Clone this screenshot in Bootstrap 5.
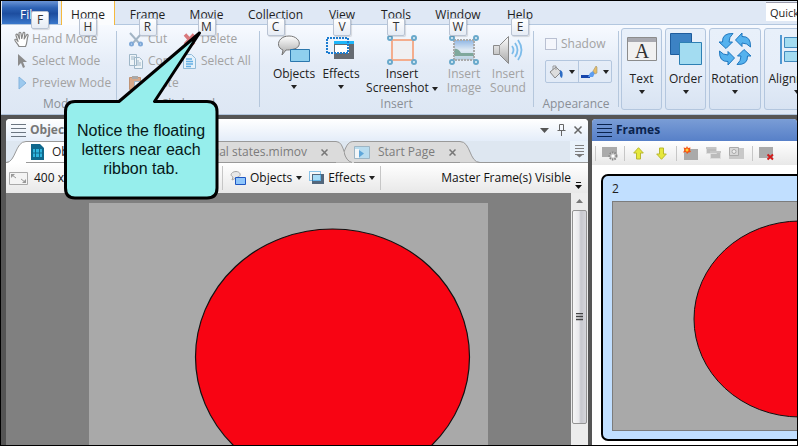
<!DOCTYPE html>
<html lang="en">
<head>
<meta charset="utf-8">
<meta name="viewport" content="width=device-width, initial-scale=1">
<title>Objects – Frames</title>
<link href="https://cdn.jsdelivr.net/npm/bootstrap@5.3.0/dist/css/bootstrap.min.css" rel="stylesheet">
<style>
body{font:12px/14px "Open Sans","Noto Sans",sans-serif;color:#1e1e1e;background:#555}
button{font:inherit;color:inherit;background:none;border:0;padding:0}
svg{display:block;flex:none}
.app{border:1px solid #000;background:#555}
.strip{height:24px;background:#dfe8f5;border-bottom:1px solid #b3c7df;padding-left:1px}
.rtab{height:23px;padding-top:4px;text-align:center;flex:none}
.w-s{width:54px}.w-m{width:59px}.w-l{width:79px}.w-x{width:70px}
.rtab.file{width:56px;background:linear-gradient(#6a94d6,#2d62b4 30%,#1d4d9f 55%,#3a78cc);color:#fff;padding:4px 18px 0;text-align:left}
.rtab.home{width:54px;margin:0 3px;height:24px;background:#fbfcfe;border:solid #f5b93d;border-width:0 1px;}
.keytip{position:absolute;left:50%;top:17px;margin-left:-9px;width:18px;height:18px;border:1px solid #b9c3d3;border-radius:2px;background:linear-gradient(#fff,#e6ecf5);color:#333;line-height:16px;text-align:center;z-index:3;box-shadow:1px 1px 1px #0002}
.file .keytip{top:10px;left:38px}
.quick{width:31px;height:19px;margin-top:1px;border:0;border-top:1px solid #9b9bab;padding:0 0 0 4px;font:11px "Open Sans",sans-serif;background:#fff;color:#222}
.quick::placeholder{color:#222;opacity:1}
.ribbon{height:90px;background:linear-gradient(#f7faff,#e4ecf7 45%,#dde7f4);border-bottom:1px solid #b0c4dc;padding-left:1px;color:#222}
.grp{border-right:1px solid #b5c7dc;margin:6px 0 7px;height:76px;flex:none}
.grp .rows{margin-top:-3px;height:66px}
.glabel{color:#8a8f96;text-align:center;line-height:14px;margin-top:3px}
.off{color:#a2a2a2}
.tool{height:22px;display:flex;align-items:center;gap:5px;white-space:nowrap}
.tool.tight{gap:2px}
.big{display:flex;flex-direction:column;align-items:center;padding-top:3px;flex:none;white-space:nowrap}
.big .cap{margin-top:2px;display:block}
.caret{display:inline-block;border:solid transparent;border-width:4px 3px 0;border-top-color:#222;height:0;flex:none;vertical-align:middle}
.pal{border:1px solid #b3c6de;border-radius:3px;height:82px;margin:3px 3px 0 0;padding-top:3px;background:linear-gradient(#e8f0fa,#e6eef9 50%,#d8e3f2)}
.pal.first{margin-left:2px}
.pal .cap{margin-top:6px}
.tick{width:12px;height:12px;border:1px solid #b9c0d2;background:#f4f6fc}
.tick:disabled,.tick:disabled~label{opacity:1!important}
.split{border:1px solid #b3c6de;border-radius:2px;height:23px;width:67px}
.split button{display:flex;align-items:center;justify-content:center;gap:5px;flex:1}
.split button+button{border-left:1px solid #b3c6de}
.work{display:grid;grid-template-columns:582fr 205fr;gap:4px;padding:4px 0 0 5px;flex:1;min-height:0}
.pane{display:flex;flex-direction:column;min-width:0;min-height:0;overflow:hidden;border-radius:4px 4px 0 0;background:#fff}
.phead{height:22px;display:flex;align-items:center;flex:none;padding:0 4px 0 5px;font-weight:700;font-size:12px}
.phead.l{background:linear-gradient(#fff,#e4edf9);color:#777}
.phead.r{background:linear-gradient(#7a9dd6,#5780c8);color:#0a234d}
.tabs{height:22px;background:#dee7f1;display:flex;flex:none;border-bottom:1px solid #999}
.dtab{display:flex;height:22px;flex:none}
.dtab>button,.dtab>div{border-top:1px solid #999;background:#dbdbdb;color:#7c7c7c;display:flex;align-items:center;height:21px;white-space:nowrap}
.dtab.on>button{background:#fff;color:#222}
.bar{height:30px;flex:none;display:flex;align-items:center;background:linear-gradient(#fff,#e8e8e8);color:#111;white-space:nowrap}
.vsep{width:1px;background:#c6c6c6;flex:none}
.stage{background:#808080;padding-top:10px;flex:1;min-width:0;overflow:hidden}
.sheet{width:399px;height:297px;background:#a9a9a9;margin:0 auto}
.scroll{width:17px;background:#ececec;padding:0 1px;flex:none}
.thumb{height:214px;border:1px solid #939393;border-radius:2px;background:linear-gradient(90deg,#f6f6f6,#e9e9ec 45%,#c6c7cd 60%,#d5d5da)}
.frame{border:2px solid #000;border-radius:7px;background:#c1dfff;height:267px;width:333px;margin:9px 0 0 9px;padding:6px 10px 0 9px;flex:none}
.frame .pic{border:1px solid #7c7c7c;margin-top:5px}
.callout{position:absolute;left:62px;top:30px;z-index:5;width:158px}
.callout p{position:absolute;top:90px;left:0;width:156px;font:16px/19px "Liberation Sans",Arial,sans-serif;color:#061818;text-align:center;margin:0}
</style>
</head>
<body class="overflow-hidden">
<div class="app vh-100 d-flex flex-column overflow-hidden position-relative">
<nav class="strip d-flex flex-shrink-0" aria-label="Ribbon tabs">
  <button class="rtab file position-relative">File<span class="keytip">F</span></button>
  <button class="rtab home position-relative">Home<span class="keytip">H</span></button>
  <button class="rtab w-m position-relative">Frame<span class="keytip">R</span></button>
  <button class="rtab w-m position-relative">Movie<span class="keytip">M</span></button>
  <button class="rtab w-l position-relative">Collection<span class="keytip">C</span></button>
  <button class="rtab w-s position-relative">View<span class="keytip">V</span></button>
  <button class="rtab w-s position-relative">Tools<span class="keytip">T</span></button>
  <button class="rtab w-x position-relative">Window<span class="keytip">W</span></button>
  <button class="rtab w-s position-relative">Help<span class="keytip">E</span></button>
  <input class="quick ms-auto flex-shrink-0" placeholder="Quick" aria-label="Quick search">
</nav>

<div class="ribbon d-flex flex-shrink-0 overflow-hidden">
  <section class="grp" style="width:115px">
    <div class="rows ps-2 off">
      <button class="tool tight ps-1"><svg width="16" height="17" viewBox="0 0 16 17" fill="#fff" stroke="#888" stroke-width="1.2" stroke-linejoin="round"><path d="M5 15.5C4 13 1 10.5.8 9c0-1 1.400-1.200 2.400.5L4 10.500 2 4.500c-.4-1.500 1.200-2 1.800-.6L5.500 8 5 2.500C5 .8 6.800.8 7 2.500L7.700 7.500 9 2.300c.5-1.500 2-1 1.800.5L10.200 8l2.200-3.800c.8-1.400 2.200-.6 1.600.8C12.500 8.500 13.500 12 11.500 15.500z"/></svg>Hand Mode</button>
      <button class="tool tight ps-1"><svg width="16" height="16" viewBox="0 0 16 16"><path d="M4 1v12l3-3 2 5 2-1-2-5h4z" fill="#8c8c8c"/></svg>Select Mode</button>
      <button class="tool tight ps-1"><svg width="16" height="16" viewBox="0 0 16 16"><path d="M5 2v12l7-6z" fill="#9cc9ee" stroke="#86b5de"/></svg>Preview Mode</button>
    </div>
    <div class="glabel">Mode</div>
  </section>
  <section class="grp" style="width:143px">
    <div class="rows d-flex off" style="padding-left:12px">
      <div style="width:54px">
        <button class="tool"><svg width="14" height="15" viewBox="0 0 14 15" fill="none" stroke="#7fa9d8" stroke-width="2"><path d="M1 1l9 10M13 1L4 11" stroke="#a3b5c5"/><circle cx="2.500" cy="12" r="1.500"/><circle cx="11.500" cy="12" r="1.500"/></svg>Cut</button>
        <button class="tool"><svg width="14" height="15" viewBox="0 0 14 15" fill="#eef4f8" stroke="#9fb7c8"><path d="M.5.5h7v11h-7zM5.500 3.500h5l3 3v8h-8z"/><path d="M7 7h3M7 9h5M7 11h5M2 3h4M2 5h3"/></svg>Copy</button>
        <button class="tool"><svg width="14" height="15" viewBox="0 0 14 15"><path d="M.5 1.500h11v12H.5z" fill="#d8a98a" stroke="#bf9375"/><path d="M3 0h6v3H3z" fill="#a9a9a9"/><path d="M5.500 5.500h8v9h-8z" fill="#eef3f8" stroke="#9fb7c8"/></svg>Paste</button>
      </div>
      <div>
        <button class="tool"><svg width="13" height="13" viewBox="0 0 13 13"><path d="M2 1.500l9 10M11 1.500l-9 10" stroke="#d9787c" stroke-width="3.500"/></svg>Delete</button>
        <button class="tool"><svg width="13" height="15" viewBox="0 0 13 15"><path d="M.5.5h8l4 4v10H.5z" fill="#e4f1fb" stroke="#91bbd8"/><path d="M3 5h6M3 7.500h7M3 10h7M3 12.500h5" stroke="#63afe4" stroke-width="1.500"/></svg>Select All</button>
      </div>
    </div>
    <div class="glabel">Clipboard</div>
  </section>
  <section class="grp" style="width:274px">
    <div class="rows d-flex pt-1">
      <button class="big ps-2" style="width:60px"><svg width="34" height="30" viewBox="0 0 34 30"><defs><linearGradient id="gb" x2="0" y2="1"><stop stop-color="#fff"/><stop offset="1" stop-color="#a8a8a8"/></linearGradient></defs><path d="M5 20l1-5C-2 12 1 1 12 1s14 11 5 13c-3 1-6 1-8 1z" fill="url(#gb)" stroke="#777"/><path d="M13.500 14.500h19v12h-19z" fill="#8fd0ee" stroke="#2b77ad"/></svg><span class="cap">Objects</span><i class="caret mt-1"></i></button>
      <button class="big" style="width:42px"><svg width="30" height="30" viewBox="0 0 30 30"><path d="M8 6h20v18H8z" fill="#666b72"/><path d="M8 6h20v3H8z" fill="#1eb6fa"/><path d="M9 10h14v8H9z" fill="#fff"/><path d="M1 3h21v15H1z" fill="none" stroke="#1c7cd0" stroke-width="2" stroke-dasharray="2 1"/></svg><span class="cap">Effects</span><i class="caret mt-1"></i></button>
      <button class="big" style="width:80px"><svg width="32" height="30" viewBox="0 0 32 30"><path d="M6 5h21v20H6z" fill="#f0f0f2" stroke="#f4ad8d" stroke-width="2"/><g fill="#e9f4fa" stroke="#69a9cb" stroke-width="2"><circle cx="4" cy="3" r="2"/><circle cx="28" cy="3" r="2"/><circle cx="4" cy="27" r="2"/><circle cx="28" cy="27" r="2"/></g></svg><span class="cap">Insert<br>Screenshot <i class="caret"></i></span></button>
      <button class="big off" style="width:44px"><svg width="32" height="30" viewBox="0 0 32 30"><defs><linearGradient id="sky" x2="0" y2="1"><stop stop-color="#8fb6e4"/><stop offset=".5" stop-color="#dfeaf4"/><stop offset="1" stop-color="#b7cfe0"/></linearGradient></defs><path d="M6 5h20v20H6z" fill="url(#sky)"/><path d="M6 14q4-1 7 4h13v3H6z" fill="#7fa89c"/><path d="M6 5h20v20H6z" fill="none" stroke="#aaa" stroke-width="2" stroke-dasharray="2 1"/><g fill="#e9f4fa" stroke="#69a9cb" stroke-width="2"><circle cx="4" cy="3" r="2"/><circle cx="28" cy="3" r="2"/><circle cx="4" cy="27" r="2"/><circle cx="28" cy="27" r="2"/></g></svg><span class="cap">Insert<br>Image</span></button>
      <button class="big off" style="width:44px"><svg width="32" height="30" viewBox="0 0 32 30"><path d="M1.500 10.500h6l9-9v27l-9-9h-6z" fill="url(#gb)" stroke="#8a8a8a"/><path d="M7.500 10.500v9" stroke="#999"/><g fill="none" stroke="#7dbcea" stroke-width="1.800"><path d="M20 11q3 4 0 8M23 8q5 7 0 14M26 5q7 10 0 20"/></g></svg><span class="cap">Insert<br>Sound</span></button>
    </div>
    <div class="glabel">Insert</div>
  </section>
  <section class="grp" style="width:85px">
    <div class="rows off" style="padding:6px 0 0 11px">
      <div class="d-flex align-items-center gap-1" style="height:20px"><input type="checkbox" id="shadow" disabled class="tick form-check-input m-0 rounded-0"><label for="shadow">Shadow</label></div>
      <div class="split d-flex" style="margin-top:6px">
        <button aria-label="Fill"><svg width="15" height="14" viewBox="0 0 15 14"><path d="M1 7l6-5 5 5-6 6z" fill="#ddd" stroke="#888"/><path d="M4 5V1h3v4" fill="none" stroke="#999"/><path d="M11 5q4 1 2 8-3-1-2-8z" fill="#2c6cc4"/></svg><i class="caret"></i></button>
        <button aria-label="Line"><svg width="17" height="14" viewBox="0 0 17 14"><path d="M0 10h9v3H0z" fill="#1746ad"/><path d="M7 12l2-4 3-2 2 2-2 4z" fill="#5d9df0"/><path d="M12 6l3-5 1 1v6l-2 1z" fill="#e7bd67" stroke="#a0936f" stroke-width=".6"/></svg><i class="caret"></i></button>
      </div>
    </div>
    <div class="glabel">Appearance</div>
  </section>
  <button class="big pal first" style="width:41px"><svg width="30" height="34" viewBox="0 0 30 34"><path d="M.5 5.500h29v23H.5z" fill="#f1f1f1" stroke="#8c8c8c"/><path d="M1 6h28v4H1z" fill="#a8a9b0"/><text x="15" y="26" text-anchor="middle" font-family="Liberation Serif" font-size="20" fill="#333">A</text></svg><span class="cap">Text</span><i class="caret mt-1"></i></button>
  <button class="big pal" style="width:41px"><svg width="32" height="34" viewBox="0 0 32 34"><path d="M.5 1.500h21v21H.5z" fill="#3c82c4" stroke="#1e5c9d"/><path d="M9.500 10.500h22v22h-22z" fill="#a3dcf1" stroke="#2d80b4"/></svg><span class="cap">Order</span><i class="caret mt-1"></i></button>
  <button class="big pal" style="width:52px"><svg width="34" height="34" viewBox="-17 -17 34 34"><defs><path id="arr" d="M-2-15.500Q-13-16-12.500-7H-16L-9-.5-2.500-7H-6Q-6-12-2-15.500z" fill="#55b2ee" stroke="#1c76bf" stroke-linejoin="round"/></defs><use href="#arr"/><use href="#arr" transform="rotate(90)"/><use href="#arr" transform="rotate(180)"/><use href="#arr" transform="rotate(270)"/></svg><span class="cap">Rotation</span><i class="caret mt-1"></i></button>
  <button class="big pal" style="width:66px"><svg width="34" height="34" viewBox="0 0 34 34"><path d="M1 3v29" stroke="#5098d2" stroke-width="2"/><path d="M4.500 5.500h20v10h-20zM4.500 19.500h28v10h-28z" fill="#a3dcf1" stroke="#438bbf"/></svg><span class="cap">Alignment</span><i class="caret mt-1"></i></button>
</div>

<main class="work">
  <section class="pane">
    <header class="phead l"><svg width="15" height="13" viewBox="0 0 15 13" stroke="#6c7681" class="me-1"><path d="M0 .5h15M0 4.500h15M0 8.500h15M0 12.500h15"/></svg>Objects
      <svg class="ms-auto" width="46" height="14" viewBox="0 0 46 14"><path d="M2 5h9l-4.500 5z" fill="#555"/><g fill="none" stroke="#666"><path d="M21.500 1.500h4v6h-4zM19.500 7.500h8M23.500 8v5"/><path d="M36.500 3.500l7 7M43.500 3.500l-7 7" stroke-width="1.500"/></g></svg>
    </header>
    <div class="tabs">
      <div class="dtab on"><svg width="20" height="22" viewBox="0 0 20 22"><path d="M0 22C10 22 9 .5 20 .5V22z" fill="#fff"/><path d="M0 21.500C10 21.500 9 .5 20 .5" fill="none" stroke="#999"/></svg><button style="width:120px"><svg width="14" height="16" viewBox="0 0 14 16" class="me-2 ms-1"><path d="M1 0h9l4 4v12H1z" fill="#10688c"/><path d="M3 5h9v8H3z" fill="#2fb5de"/><path d="M5.500 5v8M9.500 5v8M3 9h9" stroke="#10688c"/></svg>Objects.mimov</button></div>
      <div class="dtab"><div style="width:190px"><span class="text-end" style="width:161px">Visual states.mimov</span><button class="ms-auto me-2" aria-label="Close tab"><svg width="7" height="7" viewBox="0 0 7 7" stroke="#777" stroke-width="1.500"><path d="M.5.5l6 6M6.500.5l-6 6"/></svg></button></div><svg width="18" height="22" viewBox="0 0 18 22"><path d="M0 .5C10 .5 6 21.500 18 21.500H0z" fill="#dbdbdb"/><path d="M0 .5C10 .5 6 21.500 18 21.500" fill="none" stroke="#999"/></svg></div>
      <div class="dtab" style="margin-left:-10px"><svg width="10" height="22" viewBox="0 0 10 22"><path d="M0 11C3 3 5 .5 10 .5V22H8Q2 20 0 11z" fill="#dbdbdb"/><path d="M8 21.500Q2 20 0 11C3 3 5 .5 10 .5" fill="none" stroke="#999"/></svg><div style="width:106px"><svg width="16" height="13" viewBox="0 0 16 13" class="me-2"><path d="M.5.5h15v12H.5z" fill="#b9dcef" stroke="#9db5c4"/><path d="M1 3h4v9H1z" fill="#f3f6f8"/><path d="M5 4l5 3.500-5 4z" fill="#5fa7da"/></svg>Start Page<button class="ms-auto me-1" aria-label="Close tab"><svg width="7" height="7" viewBox="0 0 7 7" stroke="#777" stroke-width="1.500"><path d="M.5.5l6 6M6.500.5l-6 6"/></svg></button></div><svg width="20" height="22" viewBox="0 0 20 22"><path d="M0 .5C11 .5 9 21.500 20 21.500H0z" fill="#dbdbdb"/><path d="M0 .5C11 .5 9 21.500 20 21.500" fill="none" stroke="#999"/></svg></div>
      <button class="ms-auto" aria-label="Tab list" style="width:18px;background:#e9f2fa"><svg class="mx-auto" width="9" height="13" viewBox="0 0 9 13"><path d="M0 .5h9M0 3.500h9M0 6.500h9M0 9.500h9" stroke="#808080"/><path d="M1 9.500h7l-3.500 3z" fill="#777"/></svg></button>
    </div>
    <div class="bar" role="toolbar">
      <div class="d-flex align-items-center" style="width:216px;padding-left:3px;gap:6px"><svg width="19" height="13" viewBox="0 0 19 13"><path d="M.5.5h18v12H.5z" fill="#f4f4f4" stroke="#aaa"/><path d="M2 2h4L2 6zM17 11h-4l4-4z" fill="#999"/><path d="M3 3l4 3M16 10l-4-3" stroke="#999"/></svg>400 x 300</div>
      <span class="vsep" style="height:24px"></span>
      <button class="d-flex align-items-center gap-1" style="padding-left:7px"><svg width="16" height="15" viewBox="0 0 16 15"><path d="M2 9l1-3C-1 4 2 .5 6 .5s6 4 2 5.500z" fill="#e8e8e8" stroke="#a6a6a6"/><path d="M5.500 6.500h10v7h-10z" fill="#8fc6fb" stroke="#1f56c2"/></svg>Objects<i class="caret"></i></button>
      <button class="d-flex align-items-center gap-1" style="padding-left:7px"><svg width="15" height="14" viewBox="0 0 15 14"><path d="M3 3h12v10H3z" fill="#53677c"/><path d="M4 4h8v6H4z" fill="#a8dcf7"/><path d="M.5.5h11v9H.5z" fill="none" stroke="#1d8fd8" stroke-dasharray="1 1"/></svg>Effects<i class="caret"></i></button>
      <span class="vsep" style="height:24px;margin-left:5px"></span>
      <span class="ms-auto">Master Frame(s) Visible</span>
      <svg class="align-self-end mb-1 ms-1" style="margin-right:6px" width="7" height="7" viewBox="0 0 7 7"><path d="M1 0h5v1H1zM0 3h7L3.500 7z" fill="#111"/></svg>
    </div>
    <div class="d-flex flex-fill overflow-hidden">
      <div class="stage"><div class="sheet"><svg width="399" height="297" viewBox="0 0 399 297"><ellipse cx="243.500" cy="154" rx="137" ry="128" fill="#f80413" stroke="#111" stroke-width="1.200"/></svg></div></div>
      <div class="scroll"><svg class="mx-auto" width="7" height="17" viewBox="0 0 7 17"><path d="M0 10h7L3.500 6z" fill="#777"/></svg><div class="thumb d-flex align-items-center justify-content-center"><svg width="7" height="8" viewBox="0 0 7 8" stroke="#444"><path d="M0 .5h7M0 3.500h7M0 6.500h7" stroke-width="1.500"/></svg></div></div>
    </div>
  </section>

  <section class="pane">
    <header class="phead r"><svg width="15" height="13" viewBox="0 0 15 13" stroke="#0a234d" class="me-1"><path d="M0 .5h15M0 4.500h15M0 8.500h15M0 12.500h15"/></svg>Frames</header>
    <div class="bar" role="toolbar" style="height:24px;padding-left:3px">
      <span class="vsep" style="height:15px"></span>
      <button style="margin-left:6px" aria-label="Frame properties"><svg width="16" height="15" viewBox="0 0 16 15"><path d="M0 1h15v10H0z" fill="#aaa"/><circle cx="11" cy="10" r="3.500" fill="#ccc" stroke="#888" stroke-width="2" stroke-dasharray="1.500 1"/><circle cx="11" cy="10" r="1.500" fill="#fff"/></svg></button>
      <span class="vsep" style="height:15px;margin-left:6px"></span>
      <button style="margin-left:8px" aria-label="Move up"><svg width="11" height="13" viewBox="0 0 11 13"><path id="up" d="M5.500.7L10.300 6H7.500v6h-4V6H.7z" fill="#e6e83c" stroke="#b9b82e"/></svg></button>
      <button style="margin-left:12px" aria-label="Move down"><svg width="11" height="13" viewBox="0 0 11 13"><use href="#up" transform="rotate(180 5.500 6.500)"/></svg></button>
      <span class="vsep" style="height:15px;margin-left:9px"></span>
      <button style="margin-left:6px" aria-label="New frame"><svg width="16" height="15" viewBox="0 0 16 15"><path d="M1 3h14v11H1z" fill="#aaa"/><path d="M4 0l1 2 2.500-.5L7 4l1 2-2.500.5L4 8 3 6 0 6.500 1.500 4 .5 1.500 3 2z" fill="#f55312"/><circle cx="4" cy="4" r="1.500" fill="#ffd13a"/></svg></button>
      <button style="margin-left:7px" aria-label="Duplicate frame"><svg width="16" height="13" viewBox="0 0 16 13"><path d="M.5.500h10v6H.5zM4.500 4.500h10v7h-10z" fill="#bbb" stroke="#ddd"/><path d="M0 0h10v2H0zM4 4h11v2H4z" fill="#c5c5c5"/></svg></button>
      <button style="margin-left:7px" aria-label="Background"><svg width="16" height="13" viewBox="0 0 16 13"><path d="M0 1h15v11H0z" fill="#c8c8c8"/><path d="M.5.500h9v8h-9z" fill="#d8d8d8" stroke="#aaa"/><circle cx="5" cy="4.500" r="2" fill="#eee" stroke="#aaa"/></svg></button>
      <span class="vsep" style="height:15px;margin-left:7px"></span>
      <button style="margin-left:6px" aria-label="Delete frame"><svg width="16" height="15" viewBox="0 0 16 15"><path d="M0 1h14v11H0z" fill="#aaa"/><path d="M8.500 8.500l5.500 5M14 8.500l-5.500 5" stroke="#d11d1d" stroke-width="2"/></svg></button>
    </div>
    <article class="frame"><span class="d-block">2</span><div class="pic"><svg class="w-100" height="228" viewBox="0 0 308 228" preserveAspectRatio="xMinYMin slice"><path d="M0 0h308v228H0z" fill="#a9a9a9"/><ellipse cx="187" cy="117" rx="106" ry="98" fill="#f80413" stroke="#111"/></svg></div></article>
  </section>
</main>

<aside class="callout">
  <svg width="158" height="172" viewBox="0 0 158 172"><path d="M136.500 2L91.500 70.500H144q10 0 10 10V157q0 10-10 10H12Q2.500 167 2.500 157V80.500Q2.500 70.500 12 70.500H56z" fill="#96eeec" stroke="#000" stroke-width="3" stroke-linejoin="round"/></svg>
  <p>Notice the floating<br>letters near each<br>ribbon tab.</p>
</aside>
</div>
<script src="https://cdn.jsdelivr.net/npm/bootstrap@5.3.0/dist/js/bootstrap.bundle.min.js"></script>
</body>
</html>
